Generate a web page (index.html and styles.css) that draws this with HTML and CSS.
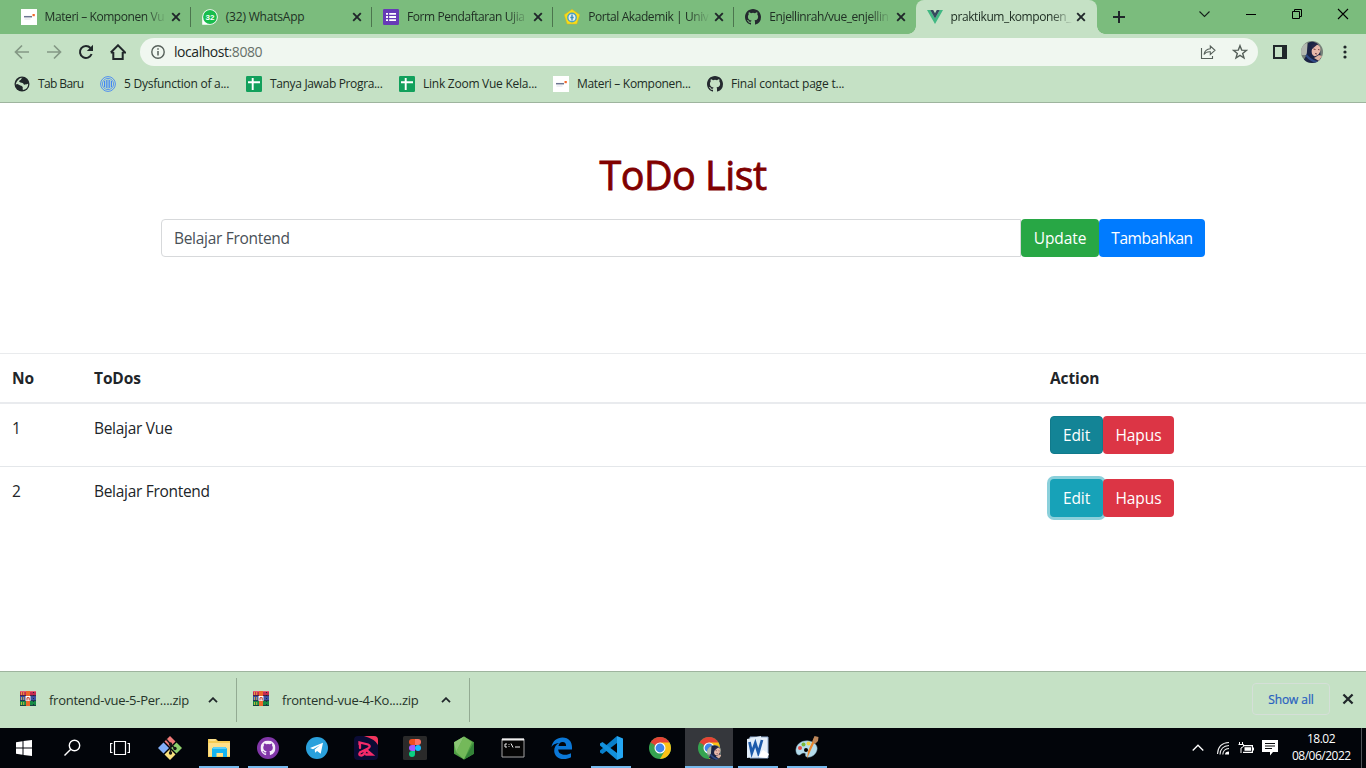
FILE: index.html
```html
<!DOCTYPE html>
<html lang="id">
<head>
<meta charset="utf-8">
<title>praktikum_komponen</title>
<link rel="stylesheet" href="styles.css">
</head>
<body>
<svg class="defs" width="0" height="0">
  <symbol id="x" viewBox="0 0 10 10"><path d="M1.2 1.2l7.6 7.6M8.8 1.2L1.2 8.8" stroke="#20272a" stroke-width="1.9" fill="none"/></symbol>
  <symbol id="materi" viewBox="0 0 16 16"><path fill="#fff" d="M0 0h16v16H0z"/><path d="M3 7.700h8" stroke="#6b7590" stroke-width="1.500"/><path d="M3.5 10h6" stroke="#d5d8de" stroke-width=".8"/><path fill="#f4692a" d="M11.5 5h2.3v2.2h-2.3z"/></symbol>
  <symbol id="cat" viewBox="0 0 16 16"><path fill-rule="evenodd" d="M8 0C3.58 0 0 3.58 0 8c0 3.54 2.29 6.53 5.47 7.59.4.07.55-.17.55-.38 0-.19-.01-.82-.01-1.49-2.01.37-2.53-.49-2.69-.94-.09-.23-.48-.94-.82-1.13-.28-.15-.68-.52-.01-.53.63-.01 1.08.58 1.23.82.72 1.21 1.87.87 2.33.66.07-.52.28-.87.51-1.07-1.78-.2-3.64-.89-3.64-3.95 0-.87.31-1.59.82-2.15-.08-.2-.36-1.02.08-2.12 0 0 .67-.21 2.2.82a7.5 7.5 0 0 1 4 0c1.53-1.04 2.2-.82 2.2-.82.44 1.1.16 1.92.08 2.12.51.56.82 1.27.82 2.15 0 3.07-1.87 3.75-3.65 3.95.29.25.54.73.54 1.48 0 1.07-.01 1.93-.01 2.2 0 .21.15.46.55.38A8 8 0 0 0 16 8c0-4.42-3.58-8-8-8z"/></symbol>
  <symbol id="sheet" viewBox="0 0 16 16"><rect width="16" height="16" rx="1.2" fill="#12a05c"/><path d="M2 6.2h12M6.7 2v12" stroke="#fff" stroke-width="1.9"/></symbol>
  <symbol id="rar" viewBox="0 0 16 15"><path fill="#c52b50" d="M0 0h16v5H0z"/><path fill="#3c51a4" d="M0 5h16v5H0z"/><path fill="#168a45" d="M0 10h16v5H0z"/><path d="M0 .5h16" stroke="#e85a72"/><path d="M0 4.6h16M0 9.6h16M0 14.6h16" stroke="#1b2340" stroke-width=".8"/><path fill="#ed682c" d="M6 0h4v15H6z"/><path d="M1.5 1v3M1.5 6v3M1.5 11v3M3.7 1v3M3.7 6v3M3.7 11v3" stroke="#e8c33c" stroke-width=".8"/><path fill="#fff" d="M5.500 5h5v5h-5z"/><path d="M7 9.500V6.7h2.200v2.800" stroke="#b9392b" fill="none"/><path d="M13.5 1v13" stroke="#18213b" stroke-dasharray="1 2" stroke-width=".9"/></symbol>
  <symbol id="up" viewBox="0 0 10 6"><path d="M1 5.2l4-4 4 4" fill="none" stroke="#20272a" stroke-width="1.8"/></symbol>
  <symbol id="chrome" viewBox="0 0 24 24"><circle cx="12" cy="12" r="11" fill="#35a450"/><path d="M12 12L2.5 6.5A11 11 0 0 1 21.5 6.5z" fill="#e64235"/><path d="M12 6.5h9.5A11 11 0 0 1 12 23l4.8-8.2z" fill="#fbc116"/><path d="M2.5 6.5l4.8 8.3L12 12z" fill="#e64235"/><path d="M2.5 6.5l4.7 8.2 2 2-3-8z" fill="#35a450"/><circle cx="12" cy="12" r="5.5" fill="#fff"/><circle cx="12" cy="12" r="4.4" fill="#4085ec"/></symbol>
  <symbol id="face" viewBox="0 0 22 22"><clipPath id="round"><circle cx="11" cy="11" r="11"/></clipPath><g clip-path="url(#round)"><path fill="#768079" d="M0 0h22v22H0z"/><path fill="#b3b9b0" d="M0 5l6-3v12H0z"/><path fill="#1b2345" d="M7 2c5-3 10 0 12 5l1 15H2c0-4 4-6 4-12z"/><ellipse cx="15" cy="9.500" rx="4.200" ry="5.800" fill="#e8b8aa" transform="rotate(20 15 9.500)"/><path d="M10 5q3-4 7-2l-6 5z" fill="#272747"/><path d="M12.5 8l2 .5M17 8.500l1.500.3M14 12.500l2 .5" stroke="#713d45"/><path fill="#ddb1a0" d="M13 17l5-3 3 1-3 5z"/><path d="M5 14q5 6 11 7" stroke="#304a86" fill="none" stroke-width="2"/></g></symbol>
</svg>

<header class="tabstrip">
  <div class="tab"><svg class="fav"><use href="#materi"/></svg><span class="tab-title fade">Materi – Komponen Vu</span><svg class="close"><use href="#x"/></svg></div>
  <div class="tab"><svg class="fav" viewBox="0 0 16 16"><path d="M.2 15.8V8a7.8 7.8 0 1 1 7.8 7.8z" fill="#fff"/><circle cx="8" cy="8" r="6.9" fill="#18bd4c"/><text x="8" y="11" class="wa">32</text></svg><span class="tab-title wide">(32) WhatsApp</span><svg class="close"><use href="#x"/></svg></div>
  <div class="tab"><svg class="fav" viewBox="0 0 16 16"><rect width="16" height="16" rx="1.2" fill="#673ab7"/><path d="M3 4.8h2M3 8h2M3 11.2h2M6.2 4.8H13M6.2 8H13M6.2 11.2H13" stroke="#fff" stroke-width="1.8"/></svg><span class="tab-title fade">Form Pendaftaran Ujia</span><svg class="close"><use href="#x"/></svg></div>
  <div class="tab"><svg class="fav" viewBox="0 0 16 16"><path d="M8 .3l7.8 5.5-2.9 9.3H3.1L.2 5.8z" fill="#f7dd17" stroke="#cfad2a" stroke-width=".5"/><circle cx="8" cy="8.5" r="4.2" fill="#e6eef0" stroke="#4ba0c2" stroke-width="1.4"/><path d="M8 5.5v6M6.3 8.5h3.4" stroke="#3d91b6" stroke-width="1.4"/></svg><span class="tab-title fade">Portal Akademik | Univ</span><svg class="close"><use href="#x"/></svg></div>
  <div class="tab last"><svg class="fav ink" ><use href="#cat"/></svg><span class="tab-title fade">Enjellinrah/vue_enjellin</span><svg class="close"><use href="#x"/></svg></div>
  <div class="tab active"><svg class="fav" viewBox="0 0 16 16"><path d="M0 1h3.2L8 9.5 12.8 1H16L8 15z" fill="#41b883"/><path d="M3.2 1h3L8 4.2 9.8 1h3L8 9.5z" fill="#35495e"/></svg><span class="tab-title fade">praktikum_komponen_</span><svg class="close"><use href="#x"/></svg></div>
  <svg class="newtab" viewBox="0 0 12 12"><path d="M6 0v12M0 6h12" stroke="#20272a" stroke-width="2"/></svg>
  <div class="wincontrols">
    <svg viewBox="0 0 46 28"><path d="M15.5 11.5l5 5 5-5" fill="none" stroke="#14201a" stroke-width="1.1"/></svg>
    <svg viewBox="0 0 46 28"><path d="M16 14.5h10" stroke="#000"/></svg>
    <svg viewBox="0 0 46 28"><path d="M16.500 11.500h7v7h-7zM18.500 11.500v-2h7v7h-2" fill="none" stroke="#000"/></svg>
    <svg viewBox="0 0 46 28"><path d="M16 9l10 10M26 9L16 19" stroke="#000" stroke-width="1.1"/></svg>
  </div>
</header>

<div class="toolbar">
  <svg class="nav dim" viewBox="0 0 16 16"><path d="M15 8H2M8 1.5L1.500 8 8 14.500"/></svg>
  <svg class="nav dim" viewBox="0 0 16 16"><path d="M1 8h13M8 1.500L14.500 8 8 14.500"/></svg>
  <svg class="nav" viewBox="0 0 16 16"><path d="M13.600 10A6 6 0 1 1 12.500 4"/><path d="M15 .8V7H8.800z" class="solid"/></svg>
  <svg class="nav home" viewBox="0 0 16 16"><path d="M3.300 8v7h9.400V8M.8 8.500L8 1.300l7.200 7.200H12.700M.8 8.500h2.500"/></svg>
  <div class="omnibox">
    <svg class="info" viewBox="0 0 14 14"><circle cx="7" cy="7" r="6.200" fill="none" stroke="#56605a" stroke-width="1.400"/><path d="M7 6v4.500M7 3.300v1.500" stroke="#56605a" stroke-width="1.500"/></svg>
    <span class="url">localhost<span class="port">:8080</span></span>
    <svg class="share" viewBox="0 0 16 16"><path d="M1.500 4v10.500h11V12" /><path d="M4 10.500Q5 5 10.300 4.800V2L15 6.300l-4.700 4.200V7.800Q6 7.500 4 10.500z"/></svg>
    <svg class="star" viewBox="0 0 16 16"><path d="M8 1.700l1.700 4.400 4.700.3-3.700 3 1.300 4.600L8 11.400 4 14l1.300-4.600-3.700-3 4.700-.3z" fill="none" stroke="#56605a" stroke-width="1.400"/></svg>
  </div>
  <svg class="panel" viewBox="0 0 14 14"><path d="M1 1h12v12H1z" fill="none" stroke="#20272a" stroke-width="2"/><path d="M9 0h5v14H9z" fill="#20272a"/></svg>
  <svg class="avatar"><use href="#face"/></svg>
  <svg class="dots" viewBox="0 0 4 14"><circle cx="2" cy="2" r="1.600"/><circle cx="2" cy="7" r="1.600"/><circle cx="2" cy="12" r="1.600"/></svg>
</div>

<nav class="bookmarks">
  <div class="bm b1"><svg class="fav" viewBox="0 0 16 16"><circle cx="8" cy="8" r="7.500" fill="#20272a"/><path d="M8.500 1.800c-2 1-.8 2-2.400 2.400S5 6 6.500 6.500s2.700.3 3 1.500 2 .7 4.700-.2A6.200 6.200 0 0 1 9 14c-1-1.500.5-2.300-.7-3.500S5.500 9.500 4.500 8.500 2.500 8 1.900 8.500 3.500 1.700 8.500 1.800z" fill="#c5e1c5"/><path d="M10 2l1.500 2.500L9.500 6l2.500.5 1.500-2z" fill="#20272a"/></svg><span>Tab Baru</span></div>
  <div class="bm b2"><svg class="fav" viewBox="0 0 16 16"><g fill="none" stroke="#4285f4"><circle cx="8" cy="8" r="7.400" stroke-width=".9"/><circle cx="8" cy="8" r="5.600" stroke-width=".8"/><path d="M4.500 5v6M6.300 4v8M8 3.500v9M9.700 4v8M11.500 5v6"/></g></svg><span>5 Dysfunction of a...</span></div>
  <div class="bm b3"><svg class="fav"><use href="#sheet"/></svg><span>Tanya Jawab Progra...</span></div>
  <div class="bm b4"><svg class="fav"><use href="#sheet"/></svg><span>Link Zoom Vue Kela...</span></div>
  <div class="bm b5"><svg class="fav"><use href="#materi"/></svg><span>Materi – Komponen...</span></div>
  <div class="bm b6"><svg class="fav ink"><use href="#cat"/></svg><span>Final contact page t...</span></div>
</nav>

<main class="page">
  <h1 class="title">ToDo List</h1>
  <div class="form">
    <input class="field" value="Belajar Frontend">
    <button class="btn update">Update</button>
    <button class="btn add">Tambahkan</button>
  </div>
  <div class="table">
    <div class="row head"><div>No</div><div>ToDos</div><div>Action</div></div>
    <div class="row"><div>1</div><div>Belajar Vue</div><div class="actions"><button class="btn edit dark">Edit</button><button class="btn remove">Hapus</button></div></div>
    <div class="row second"><div>2</div><div>Belajar Frontend</div><div class="actions"><button class="btn edit focus">Edit</button><button class="btn remove">Hapus</button></div></div>
  </div>
</main>

<section class="shelf">
  <div class="dl"><svg class="rar"><use href="#rar"/></svg><span>frontend-vue-5-Per....zip</span><svg class="up"><use href="#up"/></svg></div>
  <div class="dl"><svg class="rar"><use href="#rar"/></svg><span>frontend-vue-4-Ko....zip</span><svg class="up"><use href="#up"/></svg></div>
  <button class="showall">Show all</button>
  <svg class="shelfclose"><use href="#x"/></svg>
</section>

<footer class="taskbar">
  <div class="cell sys"><svg viewBox="0 0 24 24"><path fill="#fff" d="M4 6.200l6.500-.9v6.200H4zM11.500 5.100L20 4v7.500h-8.500zM4 12.500h6.500v6.200L4 17.800zM11.500 12.500H20V20l-8.500-1.100z"/></svg></div>
  <div class="cell sys"><svg viewBox="0 0 24 24"><g fill="none" stroke="#fff" stroke-width="1.400"><circle cx="14.500" cy="9.500" r="5.200"/><path d="M10.800 13.200L4.500 19.600"/></g></svg></div>
  <div class="cell sys"><svg viewBox="0 0 24 24"><g fill="none" stroke="#fff" stroke-width="1.200"><path d="M6.500 5.500h11v13h-11zM4.500 7.500H2.600v9h1.900M19.500 7.500h1.900v9h-1.900"/></g></svg></div>
  <div class="cell first"><svg viewBox="0 0 24 24"><path d="M12 0l5.500 5.500L12 11 6.500 5.500z" fill="#f07a78"/><path d="M18.500 6.500L24 12l-5.500 5.500L13 12z" fill="#8fd06c"/><path d="M12 13l5.500 5.500L12 24l-5.500-5.500z" fill="#fae27f"/><path d="M5.500 6.500L11 12l-5.500 5.500L0 12z" fill="#82aff7"/><path d="M8 3l4.500 5v9M12.500 8l4 4" stroke="#171717" stroke-width="1.500" fill="none"/><circle cx="12.500" cy="8" r="1.700" fill="#171717"/><circle cx="12.500" cy="17" r="1.700" fill="#171717"/><circle cx="17" cy="12.500" r="1.700" fill="#171717"/></svg></div>
  <div class="cell open"><svg viewBox="0 0 24 24"><path d="M1 3h8l2 2h12v16H1z" fill="#f6cb54"/><path d="M1.500 7H23v13H1.500z" fill="#ffe08a"/><path d="M2.500 3.500h6v1h-6z" fill="#fff4cc"/><path d="M5 21v-8.500L7 11h11l2 1.500V21h-4v-4H9.500v4z" fill="#13b4f1"/><path d="M5 13l2-2h11l2 2z" fill="#5bd0fa"/></svg></div>
  <div class="cell open"><svg viewBox="0 0 24 24"><circle cx="12" cy="12" r="11" fill="#8136a8"/><use href="#cat" x="4.500" y="4.500" width="15" height="15" fill="#f4eefa"/></svg></div>
  <div class="cell"><svg viewBox="0 0 24 24"><circle cx="12" cy="12" r="11" fill="#2aa1dc"/><path d="M5 12l13-5.300-2.300 11-3.600-2.700-2 1.800-.4-3.300L15 9.300 8 13.200z" fill="#fff"/></svg></div>
  <div class="cell"><svg viewBox="0 0 24 24"><rect width="24" height="24" rx="4" fill="#0b0b35"/><path d="M10 0h10q4 0 4 4v5q-3-6-14-9z" fill="#f2365c"/><path d="M5.500 8.500V6.500L14 8.500q3.500 1.500 0 4L6 16.500q-2 3 1.500 3 2 0 4-4.500M6 8v4M12.500 14l5.500 4.500h-6" fill="none" stroke="#f52a69" stroke-width="2.300" stroke-linecap="round"/></svg></div>
  <div class="cell"><svg viewBox="0 0 24 24"><rect width="24" height="24" rx="1.500" fill="#2a2a2a"/><path d="M12 3H9a3 3 0 0 0 0 6h3z" fill="#f24e1e"/><path d="M12 3h3a3 3 0 0 1 0 6h-3z" fill="#ff7262"/><path d="M12 9H9a3 3 0 0 0 0 6h3z" fill="#a259ff"/><circle cx="15" cy="12" r="3" fill="#1abcfe"/><path d="M12 15H9a3 3 0 1 0 3 3z" fill="#0acf83"/></svg></div>
  <div class="cell"><svg viewBox="0 0 24 24"><path d="M12 .5l10 5.800v11.400L12 23.500 2 17.700V6.300z" fill="#4d9e43"/><path d="M12 .5L4 16l8 7.500L20 6z" fill="#74b95a"/><path d="M4 16l-2-9.700L12 .5z" fill="#8bc574"/><path d="M22 6.300L12 23.500l10-5.800z" fill="#348338"/></svg></div>
  <div class="cell"><svg viewBox="0 0 24 24"><path d="M1 3h22v18H1z" fill="#050505" stroke="#a3a3a3"/><path d="M1 3.500h22" stroke="#eee" stroke-width="2"/><path d="M6 8H4v3h2M8 8v.8M8 10.200v.8M10 7.500l2 4M14 11h5" stroke="#eee" fill="none"/></svg></div>
  <div class="cell"><svg viewBox="0 0 24 24"><path d="M1.500 11C2.500 5 7 1.500 12.500 1.500 19 1.500 22 6 22 11v2.500H8.200c.2 4 3.600 5.200 6.800 5.200 2.500 0 4.500-.7 6-1.500v4c-2 1-4.300 1.800-7.500 1.800C8 23 4.200 19.500 4.200 14.700c0-3.500 1.800-6.200 5-7.700-4 .2-6.500 2-7.700 4zM8.500 10h7.600c0-2.500-1.200-4-3.500-4s-3.600 1.500-4.100 4z" fill="#0b78d7"/></svg></div>
  <div class="cell open"><svg viewBox="0 0 24 24"><path d="M18 0l6 2.500v19L18 24z" fill="#24a6f2"/><path d="M18 0L1 14.500v2L3.500 18 18 7z" fill="#087fca"/><path d="M18 24L1 9.500v-2L3.500 6 18 17z" fill="#1391dc"/></svg></div>
  <div class="cell"><svg><use href="#chrome"/></svg></div>
  <div class="cell open current"><svg viewBox="0 0 24 24"><use href="#chrome" width="24" height="24"/><use href="#face" x="10" y="9" width="15" height="15"/></svg></div>
  <div class="cell open"><svg viewBox="0 0 24 24"><path d="M4 1h18v21H4z" fill="#e8f0fa" stroke="#91add0"/><path d="M1 3l14-3v20L1 22z" fill="#e1edf9"/><path d="M3.500 6l2.300 11L9.300 7l3 10L16 4" fill="none" stroke="#1d5bab" stroke-width="2.700"/><path d="M12 21l5-7 6 4-2 4z" fill="#fff"/></svg></div>
  <div class="cell open"><svg viewBox="0 0 24 24"><path d="M1 13C2 7 8 4 14 5s9 5 8 9-5 8-10 7c-3-.6 0-4-3-4s-3 2-5 2-3.500-3-3-6z" fill="#b4dcec" stroke="#789eaf" stroke-width=".5"/><circle cx="5" cy="12" r="2" fill="#df4e47"/><circle cx="8.500" cy="8.500" r="2" fill="#79b73b"/><circle cx="13.500" cy="7.500" r="2" fill="#efd345"/><circle cx="11" cy="14" r="2" fill="#000"/><path d="M21 3l-6 13-3 7 1-8 6-13z" fill="#e8852d"/><path d="M17.500 5l2-5 4 1-.500 4-3 3z" fill="#bd875b"/></svg></div>
  <div class="tray">
    <svg class="t-up" viewBox="0 0 12 8"><path d="M.7 6.500L6 1.200l5.300 5.300" fill="none" stroke="#fff" stroke-width="1.300"/></svg>
    <svg class="t-net" viewBox="0 0 14 14"><g fill="none" stroke="#eee" stroke-width="1.100"><path d="M1.500 13Q2 2 13 1.500M4 13.500Q4.500 5 13 4.500M6.800 13.500Q7 8 13 7.500"/></g><path d="M9 13.500q0-3 4-3v3z" fill="#fff"/></svg>
    <svg class="t-bat" viewBox="0 0 16 12"><path d="M5.500 3.600h8.900v6.800H5M15.500 5.500v3" fill="none" stroke="#fff" stroke-width="1.200"/><path d="M6.500 5.200h6.500v3.600H6.500z" fill="#fff"/><path d="M1.500 0v2M4.500 0v2M.5 2.500h5v2L3 6v5" stroke="#fff" fill="none"/></svg>
    <svg class="t-msg" viewBox="0 0 16 16"><path d="M0 0h16v12h-5l-3 3.500V12H0z" fill="#fff"/><path d="M3 3.500h10M3 6h10M3 8.500h7" stroke="#090b0d" stroke-width="1.100"/></svg>
    <div class="clock"><div class="time">18.02</div><div class="date">08/06/2022</div></div>
    <div class="peek"></div>
  </div>
</footer>
</body>
</html>
```
FILE: styles.css
```css
* { box-sizing: border-box; }
body { margin: 0; width: 1366px; height: 768px; overflow: hidden; display: flex; flex-direction: column; background: #fff; color: #212529; font-family: "Open Sans", "Noto Sans", sans-serif; }
svg { display: block; flex: none; }
.defs { position: absolute; }
button, input { font: inherit; margin: 0; }

.tabstrip { height: 34px; flex: none; display: flex; align-items: center; padding-left: 9.600px; background: #7bbc7d; }
.tab { width: 181.200px; height: 34px; flex: none; display: flex; align-items: center; padding: 0 10px 0 11px; font-size: 12px; letter-spacing: -.42px; color: #203024; background: linear-gradient(#4c754e, #4c754e) right 7px / 1px 20px no-repeat; }
.tab.last { background: none; }
.tab.active { position: relative; background: #c5e1c5; border-radius: 8px 8px 0 0; padding-right: 11px; }
.tab.active::before, .tab.active::after { content: ""; position: absolute; bottom: 0; width: 8px; height: 8px; }
.tab.active::before { left: -8px; background: radial-gradient(circle at 0 0, transparent 7.500px, #c5e1c5 8px); }
.tab.active::after { right: -8px; background: radial-gradient(circle at 100% 0, transparent 7.500px, #c5e1c5 8px); }
.fav { width: 16px; height: 16px; }
.ink { fill: #24292f; }
.wa { font: bold 8px "Liberation Sans", sans-serif; fill: #fff; text-anchor: middle; letter-spacing: 0; }
.tab-title { flex: 1; margin: 0 4px 0 8px; white-space: nowrap; line-height: 20px; }
.tab-title.wide { letter-spacing: -.2px; }
.fade { -webkit-mask-image: linear-gradient(90deg, #000 100px, transparent 122px); mask-image: linear-gradient(90deg, #000 100px, transparent 122px); }
.close { width: 10px; height: 10px; }
.newtab { width: 12px; height: 12px; margin-left: 16px; }
.wincontrols { margin-left: auto; margin-right: -2px; display: flex; align-self: flex-start; }
.wincontrols svg { width: 46px; height: 28px; }

.toolbar { height: 35px; flex: none; display: flex; align-items: center; padding-left: 14px; background: #c5e1c5; }
.nav { width: 16px; height: 16px; margin-right: 16px; fill: none; stroke: #20272a; stroke-width: 2; }
.nav.dim { stroke: #849885; stroke-width: 1.700; }
.nav .solid { fill: #20272a; stroke: none; }
.nav.home { margin-right: 14px; }
.omnibox { width: 1118px; height: 28px; border-radius: 14px; background: #f0f7f0; display: flex; align-items: center; padding: 0 10px 0 11px; }
.info { width: 14px; height: 14px; }
.url { margin-left: 9px; font-size: 14px; line-height: 20px; letter-spacing: -.45px; color: #202724; }
.port { color: #667069; }
.share { width: 16px; height: 16px; margin-left: auto; fill: none; stroke: #56605a; stroke-width: 1.100; }
.star { width: 16px; height: 16px; margin-left: 16px; }
.panel { width: 14px; height: 14px; margin-left: 15px; }
.avatar { width: 22px; height: 22px; margin-left: 14px; }
.dots { width: 4px; height: 14px; margin-left: 20px; fill: #20272a; }

.bookmarks { height: 34px; flex: none; display: flex; align-items: center; padding: 0 0 3px 14px; background: #c5e1c5; border-bottom: 1px solid #9eb49e; }
.bm { display: flex; align-items: center; gap: 8px; font-size: 12px; line-height: 18px; letter-spacing: -.25px; white-space: nowrap; color: #202c24; }
.b1 { width: 86px; letter-spacing: -.6px; }
.b2 { width: 146px; }
.b3 { width: 153px; letter-spacing: -.34px; }
.b4, .b5 { width: 154px; }
.b5 { letter-spacing: -.31px; }
.b6 { letter-spacing: -.2px; }

.page { flex: 1; min-height: 0; padding-top: 48px; font-size: 15.500px; line-height: 24px; letter-spacing: -.3px; }
.title { margin: 0 0 20px; text-align: center; font-size: 39.500px; line-height: 48px; font-weight: 400; -webkit-text-stroke: .8px #800000; letter-spacing: -.5px; color: #800000; }
.form { display: flex; width: 1044px; margin: 0 auto 96px; }
.field { width: 860px; height: 38px; border: 1px solid #d7d9db; border-radius: 4px 0 0 4px; padding: 0 12px; color: #495057; letter-spacing: inherit; outline: none; }
.btn { height: 38px; border: 0; border-radius: 4px; padding: 0; color: #fff; letter-spacing: inherit; white-space: nowrap; }
.update { width: 78px; background: #28a745; letter-spacing: -.1px; }
.add { width: 106px; background: #007bff; letter-spacing: -.45px; }
.row { display: grid; grid-template-columns: 82px 956px 1fr; height: 62px; padding-top: 12px; }
.row > div { padding-left: 12px; }
.head { height: 51px; border-top: 1px solid #e9ebed; border-bottom: 2px solid #e9ebee; font-weight: 700; letter-spacing: -.1px; }
.second { border-top: 1px solid #e4e7ea; }
.actions { display: flex; }
.edit { width: 53px; background: #17a2b8; letter-spacing: -.1px; }
.edit.dark { background: #138496; border: 1px solid #117a8b; }
.edit.focus { box-shadow: 0 0 0 3px #8bd0db; }
.remove { width: 71px; background: #dc3545; position: relative; letter-spacing: -.1px; }

.shelf { height: 57px; flex: none; display: flex; align-items: center; background: #c5e1c5; border-top: 1px solid #9eb49e; padding-right: 13px; }
.dl { width: 237px; height: 44px; display: flex; align-items: center; border-right: 1px solid #93ab93; padding: 0 18px 0 20px; font-size: 13px; letter-spacing: -.26px; color: #25342a; white-space: nowrap; }
.dl + .dl { width: 233px; padding-left: 16px; letter-spacing: -.22px; }
.rar { width: 16px; height: 15px; margin-right: 13px; margin-bottom: 3px; }
.up { width: 10px; height: 6px; margin-left: auto; }
.showall { width: 78px; height: 32px; margin-left: auto; margin-bottom: 2px; background: transparent; border: 1px solid #d5dfd8; border-radius: 4px; padding: 0; color: #285fc0; font-size: 12px; -webkit-text-stroke: .2px #285fc0; letter-spacing: -.1px; }
.shelfclose { width: 12px; height: 12px; margin-left: 12px; margin-right: -1px; margin-bottom: 2px; }

.taskbar { height: 40px; flex: none; display: flex; background: #02050a; }
.cell { width: 40px; margin: 0 4.500px; height: 40px; display: flex; align-items: center; justify-content: center; }
.cell > svg { width: 24px; height: 24px; }
.cell.sys { width: 48px; margin: 0; }
.cell.first { margin-left: 5.500px; }
.cell.open { border-bottom: 2px solid #76b9ed; padding-top: 2px; }
.cell.current { width: 48px; margin: 0 .5px; background: #35373c; }
.tray { margin-left: auto; display: flex; align-items: center; color: #fff; }
.t-up { width: 12px; height: 8px; margin-right: 12px; }
.t-net { width: 14px; height: 14px; margin-right: 8px; }
.t-bat { width: 16px; height: 12px; margin-right: 8px; }
.t-msg { width: 16px; height: 16px; margin-right: 14px; }
.clock { width: 58px; font-size: 12px; line-height: 17px; letter-spacing: -.5px; text-align: center; white-space: nowrap; padding-bottom: 2px; }
.peek { width: 1px; height: 40px; margin: 0 4px 0 11px; background: #4f5358; }
```
